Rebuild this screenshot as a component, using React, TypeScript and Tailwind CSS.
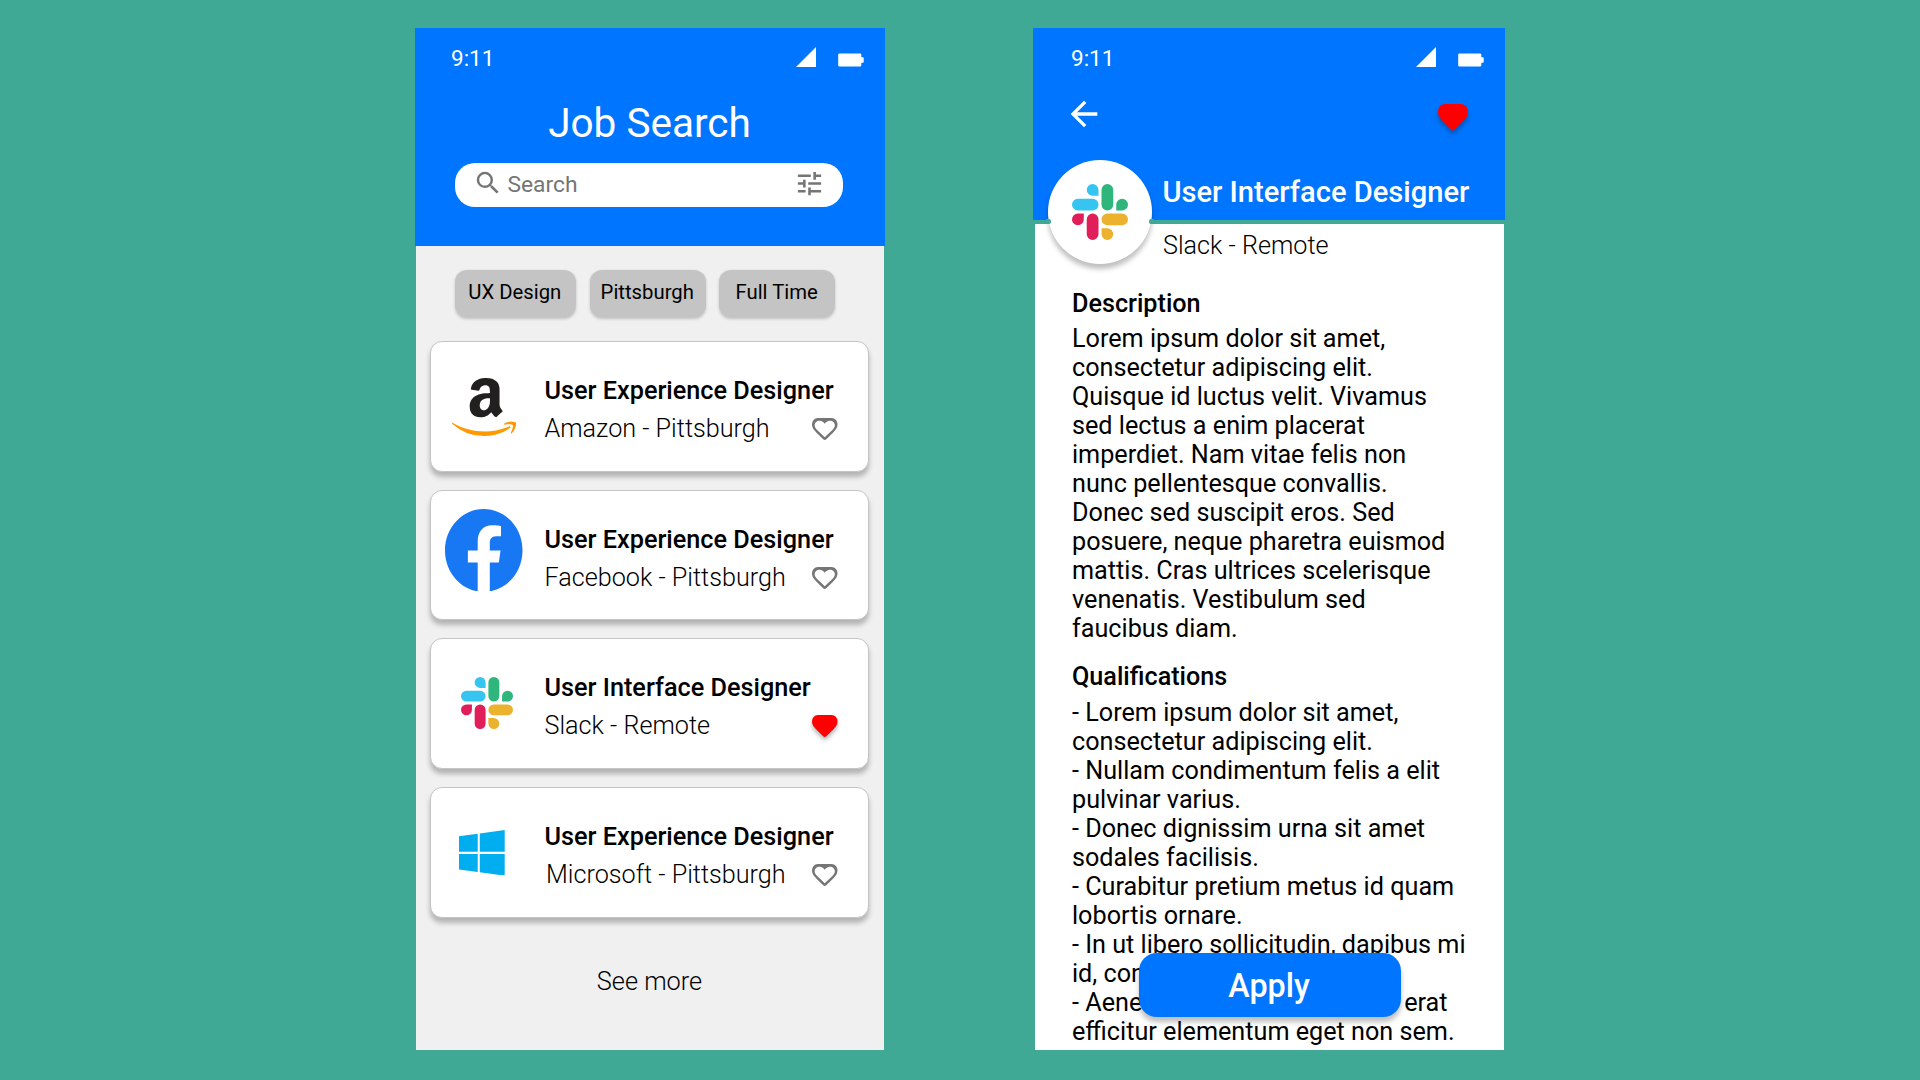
import type { ReactNode } from "react";
import { FaFacebook, FaWindows } from "react-icons/fa";
import { SiAmazon } from "react-icons/si";
import { MdArrowBack, MdSearch, MdTune } from "react-icons/md";

const HEART_OUTER =
  "M6 0H20C23.6 0 26 3 26 6.6C26 9.8 24.2 12 21.6 14.6L14.6 21.2Q13 22.6 11.4 21.2L4.4 14.6C1.8 12 0 9.8 0 6.6C0 3 2.4 0 6 0Z";
const HEART_INNER =
  "M13 5.8C11.8 4 10 2.7 7.8 2.7C4.9 2.7 2.7 4.6 2.7 7.2C2.7 9.6 4.4 11.2 6.3 13L13 19.2L19.7 13C21.6 11.2 23.3 9.6 23.3 7.2C23.3 4.6 21.1 2.7 18.2 2.7C16 2.7 14.2 4 13 5.8Z";

function Heart({ filled, className }: { filled?: boolean; className: string }) {
  return (
    <svg viewBox="0 0 26 22" preserveAspectRatio="none" className={className}>
      <path d={HEART_OUTER} fill={filled ? "#ff0000" : "#757575"} />
      {!filled && <path d={HEART_INNER} fill="#ffffff" />}
    </svg>
  );
}

function SlackLogo({ className }: { className: string }) {
  return (
    <svg viewBox="0 0 24 24" className={className}>
      <path
        fill="#E01E5A"
        d="M5.042 15.165a2.528 2.528 0 0 1-2.52 2.523A2.528 2.528 0 0 1 0 15.165a2.527 2.527 0 0 1 2.522-2.52h2.52v2.52zM6.313 15.165a2.527 2.527 0 0 1 2.521-2.52 2.527 2.527 0 0 1 2.521 2.52v6.313A2.528 2.528 0 0 1 8.834 24a2.528 2.528 0 0 1-2.521-2.522v-6.313z"
      />
      <path
        fill="#36C5F0"
        d="M8.834 5.042a2.528 2.528 0 0 1-2.521-2.52A2.528 2.528 0 0 1 8.834 0a2.528 2.528 0 0 1 2.521 2.522v2.52H8.834zM8.834 6.313a2.528 2.528 0 0 1 2.521 2.521 2.528 2.528 0 0 1-2.521 2.521H2.522A2.528 2.528 0 0 1 0 8.834a2.528 2.528 0 0 1 2.522-2.521h6.312z"
      />
      <path
        fill="#2EB67D"
        d="M18.956 8.834a2.528 2.528 0 0 1 2.522-2.521A2.528 2.528 0 0 1 24 8.834a2.528 2.528 0 0 1-2.522 2.521h-2.522V8.834zM17.688 8.834a2.528 2.528 0 0 1-2.523 2.521 2.527 2.527 0 0 1-2.52-2.521V2.522A2.527 2.527 0 0 1 15.165 0a2.528 2.528 0 0 1 2.523 2.522v6.312z"
      />
      <path
        fill="#ECB22E"
        d="M15.165 18.956a2.528 2.528 0 0 1 2.523 2.522A2.528 2.528 0 0 1 15.165 24a2.527 2.527 0 0 1-2.52-2.522v-2.522h2.52zM15.165 17.688a2.527 2.527 0 0 1-2.52-2.523 2.526 2.526 0 0 1 2.52-2.52h6.313A2.527 2.527 0 0 1 24 15.165a2.528 2.528 0 0 1-2.522 2.523h-6.313z"
      />
    </svg>
  );
}

function AmazonLogo() {
  return (
    <div className="ml-[21px] mt-[32.5px] w-16">
      <svg className="absolute size-0">
        <defs>
          <linearGradient id="amazon" gradientUnits="userSpaceOnUse" x1="0" y1="0" x2="0" y2="24">
            <stop offset="0.7" stopColor="#221f1f" />
            <stop offset="0.7" stopColor="#ff9900" />
          </linearGradient>
        </defs>
      </svg>
      <SiAmazon fill="url(#amazon)" className="size-16" />
    </div>
  );
}

function StatusBar() {
  return (
    <div className="mt-4 flex h-7 items-start text-white">
      <span className="text-[22.5px] leading-7">9:11</span>
      <div className="ml-auto flex gap-[22px] pr-[21.5px]">
        <svg viewBox="0 0 20 20" className="mt-[3px] size-5">
          <path d="M20 0V20H0Z" fill="#fff" />
        </svg>
        <svg viewBox="0 0 26 14" className="mt-[8.5px] h-[14px] w-[26px]">
          <path
            d="M1.5 0.5H22A1.3 1.3 0 0 1 23.3 1.8V4.3H25A.7.7 0 0 1 25.7 5V9A.7.7 0 0 1 25 9.7H23.3V12.2A1.3 1.3 0 0 1 22 13.5H1.5A1.3 1.3 0 0 1 .2 12.2V1.8A1.3 1.3 0 0 1 1.5 .5Z"
            fill="#fff"
          />
        </svg>
      </div>
    </div>
  );
}

type Job = { title: string; place: string; liked?: boolean; shift?: boolean; logo: ReactNode };

const jobs: Job[] = [
  { title: "User Experience Designer", place: "Amazon - Pittsburgh", logo: <AmazonLogo /> },
  {
    title: "User Experience Designer",
    place: "Facebook - Pittsburgh",
    logo: (
      <FaFacebook
        viewBox="8 8 496 494"
        preserveAspectRatio="none"
        className="ml-[14px] mt-[18px] h-[82.5px] w-[77.5px] text-[#1877f2]"
      />
    ),
  },
  {
    title: "User Interface Designer",
    place: "Slack - Remote",
    liked: true,
    logo: <SlackLogo className="ml-[30.3px] mt-[37.7px] size-[52px]" />,
  },
  {
    title: "User Experience Designer",
    place: "Microsoft - Pittsburgh",
    shift: true,
    logo: (
      <FaWindows
        viewBox="0 32 448 448"
        className="ml-[28px] mt-[41.7px] size-[45.7px] text-[#00adef]"
      />
    ),
  },
];

function JobCard({ job }: { job: Job }) {
  return (
    <article className="flex h-[130.7px] rounded-[12px] border border-[#c4c4c4] bg-white shadow-[0_5px_5px_rgba(0,0,0,0.25)]">
      <div className="w-[113.5px] shrink-0">{job.logo}</div>
      <div className="flex grow flex-col gap-[6px] whitespace-nowrap pr-[30.5px] pt-[32.9px]">
        <h2 className="text-[25.25px] font-medium leading-8">{job.title}</h2>
        <div className="flex items-start justify-between">
          <p className={"text-[25.2px] font-light leading-8 " + (job.shift ? "pl-[1.5px]" : "")}>
            {job.place}
          </p>
          <Heart
            filled={job.liked}
            className={
              "mt-[5px] h-[22px] w-[25.5px] shrink-0 overflow-visible " +
              (job.liked ? "drop-shadow-[0_3px_2px_rgba(0,0,0,0.3)]" : "")
            }
          />
        </div>
      </div>
    </article>
  );
}

function Chip({ label, className }: { label: string; className: string }) {
  return (
    <div
      className={
        "flex h-[46.5px] items-center justify-center rounded-[12px] bg-[#c4c4c4] pb-[1.5px] text-[20.3px] text-black shadow-[0_1.5px_3px_rgba(0,0,0,0.2)] " +
        className
      }
    >
      {label}
    </div>
  );
}

function SearchScreen() {
  return (
    <section className="flex w-[470px] flex-col">
      <header className="h-[218px] bg-[#0075ff] pl-9">
        <StatusBar />
        <h1 className="-ml-[37px] mt-[26.7px] text-center text-[40.5px] leading-[48px] text-white">
          Job Search
        </h1>
        <div className="ml-1 mt-4 flex h-11 w-[388px] items-center rounded-[20px] bg-white pl-[17.5px] pr-[18.5px] text-[#757575]">
          <MdSearch className="mb-[3px] size-[30px]" />
          <span className="ml-[5px] pt-px text-[22.8px]">Search</span>
          <MdTune className="mb-[2px] ml-auto size-[31px]" />
        </div>
      </header>
      <div className="mx-px flex h-[804px] flex-col bg-[#f0f0f0] pl-[14px] pr-[15px] pt-6">
        <div className="flex pl-[25px]">
          <Chip label="UX Design" className="w-[121px] pr-[1.5px]" />
          <Chip label="Pittsburgh" className="ml-[14px] w-[116px] pr-[1.5px]" />
          <Chip label="Full Time" className="ml-[12.6px] w-[116px]" />
        </div>
        <div className="mt-[24.5px] flex flex-col gap-[18px]">
          {jobs.map((job) => (
            <JobCard key={job.place} job={job} />
          ))}
        </div>
        <p className="mt-[48.4px] text-center text-[25.3px] font-light leading-8">See more</p>
      </div>
    </section>
  );
}

const description = [
  "Lorem ipsum dolor sit amet,",
  "consectetur adipiscing elit.",
  "Quisque id luctus velit. Vivamus",
  "sed lectus a enim placerat",
  "imperdiet. Nam vitae felis non",
  "nunc pellentesque convallis.",
  "Donec sed suscipit eros. Sed",
  "posuere, neque pharetra euismod",
  "mattis. Cras ultrices scelerisque",
  "venenatis. Vestibulum sed",
  "faucibus diam.",
];

const qualifications = [
  "- Lorem ipsum dolor sit amet,",
  "consectetur adipiscing elit.",
  "- Nullam condimentum felis a elit",
  "pulvinar varius.",
  "- Donec dignissim urna sit amet",
  "sodales facilisis.",
  "- Curabitur pretium metus id quam",
  "lobortis ornare.",
  "- In ut libero sollicitudin, dapibus mi",
  "id, con",
];

function Line({ children }: { children: ReactNode }) {
  return <p className="whitespace-nowrap">{children}</p>;
}

function DetailScreen() {
  return (
    <section className="relative flex w-[473px] flex-col">
      <header className="mr-[0.6px] flex h-48 flex-col bg-[#0075ff] pl-[38px]">
        <StatusBar />
        <div className="-ml-[7.5px] mt-[22px] flex items-start justify-between pr-[37.5px]">
          <MdArrowBack className="size-10 text-white" />
          <Heart
            filled
            className="mt-[9.7px] h-[26.5px] w-[30px] overflow-visible drop-shadow-[0_4px_2px_rgba(0,0,0,0.25)]"
          />
        </div>
        <h1 className="ml-[91.5px] mt-[39.8px] whitespace-nowrap text-[29.1px] font-medium leading-9 text-white">
          User Interface Designer
        </h1>
      </header>
      <div className="ml-[2px] mr-[2px] mt-1 h-[826px] overflow-hidden bg-white pl-[37px] text-[25.2px] leading-[29px] text-black">
        <p className="ml-[91px] mt-[6.4px] font-light leading-8">Slack - Remote</p>
        <h2 className="mt-[26.6px] font-medium">Description</h2>
        <div className="mt-[6.5px]">
          {description.map((line) => (
            <Line key={line}>{line}</Line>
          ))}
        </div>
        <h2 className="mt-[19px] font-medium">Qualifications</h2>
        <div className="mt-[6.5px]">
          {qualifications.map((line) => (
            <Line key={line}>{line}</Line>
          ))}
          <div className="flex w-[375.5px] justify-between">
            <span>- Aene</span>
            <span>erat</span>
          </div>
          <Line>efficitur elementum eget non sem.</Line>
        </div>
      </div>
      {/* Tips of the clipped next line, peeking over the bottom edge */}
      <svg viewBox="0 0 240 2" className="absolute left-[50px] top-[1020.5px] h-[2px] w-[240px]">
        <path
          d="M3 2Q7 0 11 2ZM26 2Q31 0 36 2ZM90 2Q96 0 103 2ZM143 2Q150 0 158 2ZM202 2Q204 0 207 2ZM222 2Q225 0 228 2Z"
          fill="#40a995"
        />
      </svg>
      <div className="absolute left-[15px] top-[132px] flex size-[103.5px] items-center justify-center rounded-full bg-white shadow-[0_5px_5px_rgba(0,0,0,0.25)]">
        <SlackLogo className="mt-px size-[56px]" />
      </div>
      <div className="absolute left-[13px] top-[191px] h-[5px] w-[5px] rounded-r-xs bg-[#40a995]" />
      <div className="absolute left-[116px] top-[191px] h-[5px] w-[5px] rounded-l-xs bg-[#40a995]" />
      <button className="absolute left-[106px] top-[924.5px] flex h-[64.5px] w-[262px] items-center justify-center rounded-[18px] bg-[#0075ff] pr-[2px] pt-[2px] text-[32.3px] font-medium text-white shadow-[0_5px_5px_rgba(0,0,0,0.25)]">
        Apply
      </button>
    </section>
  );
}

export default function App() {
  return (
    <main className="flex h-[1080px] w-[1920px] gap-[148px] overflow-hidden bg-[#40a995] pl-[415px] pt-7 font-[Roboto,sans-serif] text-black">
      <SearchScreen />
      <DetailScreen />
    </main>
  );
}
